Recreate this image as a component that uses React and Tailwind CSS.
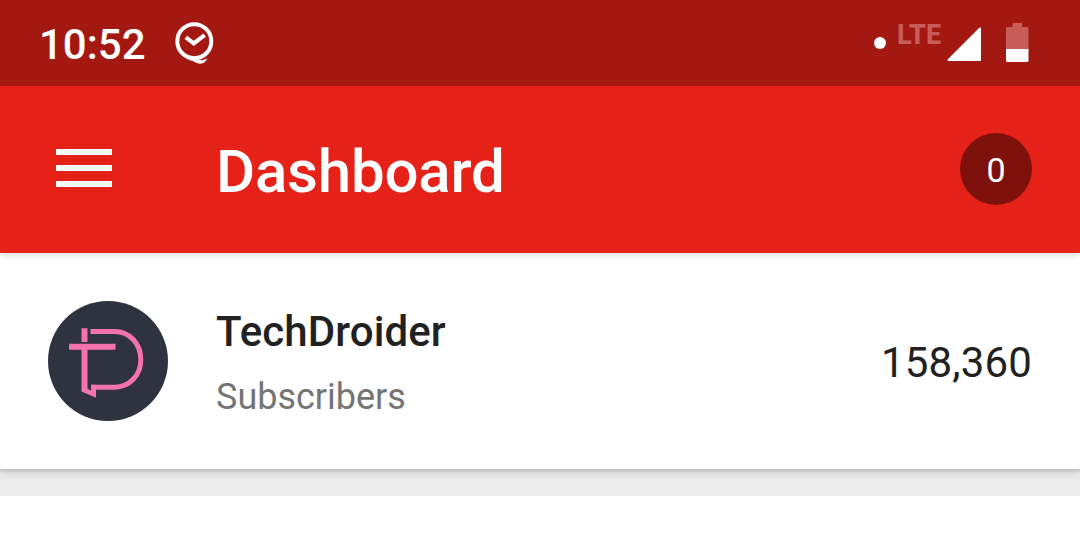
function ClockIcon() {
  return (
    <svg className="ml-[29px] h-11 w-10" viewBox="0 0 40 44" fill="none" stroke="#fff">
      <circle cx="19.3" cy="19.2" r="17" strokeWidth="4" />
      <path d="M10.8 15.3 18.8 21.4 29.6 13.2" strokeWidth="4.2" />
      <path
        d="M14.500 37.800c4.500-3.200 8 1 12 .8 2 0 3.500-.6 5-1.500-1.200 3-3.600 4.200-6.800 4.200-4 0-5.800-3.500-10.200-3.500z"
        fill="#fff"
        strokeWidth=".8"
      />
      <path d="m22 35-3.500 4" strokeWidth="3" />
    </svg>
  );
}

function SignalIcon() {
  return (
    <svg className="ml-1 h-9 w-9" viewBox="0 0 36 36">
      <path d="M34 2.500v31.500H2.500z" fill="#fff" stroke="#fff" strokeWidth="2" strokeLinejoin="round" />
    </svg>
  );
}

function BatteryIcon() {
  return (
    <svg className="ml-[23px] h-10 w-6" viewBox="0 0 24 40">
      <path d="M7.500 0H17v4h5q1.500 0 1.500 1.500V27H1V5.500Q1 4 2.500 4h5z" fill="#c75c58" />
      <path d="M1 26h22.500v11.500q0 1.500-1.500 1.500H2.500Q1 39 1 37.500z" fill="#fff" />
    </svg>
  );
}

function StatusBar() {
  return (
    <div className="relative z-10 flex h-[86px] items-start bg-[#a31810] pl-[39px] pr-[51px] text-white">
      <span className="mt-[2px] text-[42px] font-medium leading-[86px]">10:52</span>
      <div className="pt-[22px]">
        <ClockIcon />
      </div>
      <div className="ml-auto flex items-start pt-[23px]">
        <span className="mt-[14px] h-3 w-3 rounded-full bg-white" />
        <span className="ml-[10px] mt-[-6px] w-[46px] pl-px text-[27px] font-extrabold leading-9 tracking-[0.2px] text-[#c75c58]">
          LTE
        </span>
        <div className="pt-[3px]">
          <SignalIcon />
        </div>
        <BatteryIcon />
      </div>
    </div>
  );
}

function AppBar() {
  return (
    <header className="relative flex h-[167px] items-center bg-[#e62218] pl-14 pr-12 text-white shadow-[0_1px_8px_rgba(0,0,0,0.2)]">
      <button className="-mt-[3px] flex w-14 flex-col gap-[10px]" aria-label="Menu">
        <span className="h-1.5 bg-white" />
        <span className="h-1.5 bg-white" />
        <span className="h-1.5 bg-white" />
      </button>
      <h1 className="ml-[104px] mt-1 text-[60px] font-medium leading-none tracking-[-0.2px]">
        Dashboard
      </h1>
      <span className="-mt-px ml-auto flex h-[72px] w-[72px] items-center justify-center rounded-full bg-[#7f110c] pt-px text-[34px] leading-none">
        0
      </span>
    </header>
  );
}

function ChannelAvatar() {
  return (
    <svg className="h-[120px] w-[120px]" viewBox="0 0 120 120">
      <circle cx="60" cy="60" r="60" fill="#2f323f" />
      <g fill="none" stroke="#f472ae">
        <path d="M36.500 27.300V41M21 45.800h46.500" strokeWidth="6" />
        <path d="M42.500 30.500h24c15 0 26.300 12 26.300 28s-11.300 27.700-26.300 27.700H43" strokeWidth="5" />
      </g>
      <path d="M33.500 47h6v40.700l3.500 2v-6h5v13l-14.500-6.200z" fill="#f472ae" />
    </svg>
  );
}

function ChannelRow({ name, label, count }) {
  return (
    <section className="flex h-[216px] items-center bg-white px-12 shadow-[0_2px_2px_#c4c4c4,0_4px_8px_rgba(0,0,0,0.15)]">
      <ChannelAvatar />
      <div className="ml-12 flex flex-col gap-[26px] pt-1">
        <h2 className="text-[42px] font-medium leading-[42px] tracking-[0.1px] text-[#212121]">
          {name}
        </h2>
        <p className="text-[36px] leading-9 text-[#757575]">{label}</p>
      </div>
      <span className="ml-auto mt-[3px] text-[42px] leading-none tracking-[0.15px] text-[#212121]">
        {count}
      </span>
    </section>
  );
}

export default function App() {
  return (
    <main className="h-[560px] w-[1080px] overflow-hidden bg-white font-['Roboto',sans-serif]">
      <StatusBar />
      <AppBar />
      <div className="h-[243px] bg-[#ececec]">
        <ChannelRow name="TechDroider" label="Subscribers" count="158,360" />
      </div>
    </main>
  );
}
